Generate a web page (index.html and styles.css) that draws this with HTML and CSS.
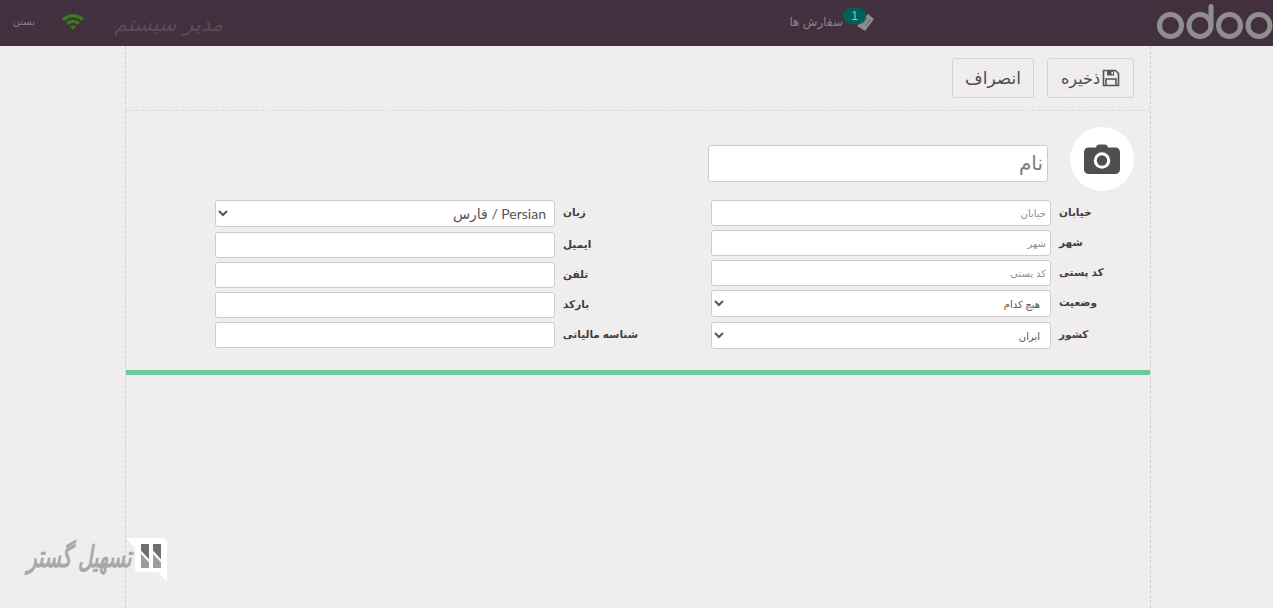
FILE: index.html
```html
<!DOCTYPE html>
<html lang="fa" dir="rtl">
<head>
<meta charset="utf-8">
<title>مشتری</title>
<link rel="stylesheet" href="styles.css">
</head>
<body>
<header class="topbar">
  <svg class="brand" viewBox="0 0 116 38" aria-label="odoo">
    <g fill="none" stroke="#8f8f8f" stroke-width="5">
      <circle cx="13.500" cy="24.500" r="11"/>
      <circle cx="43" cy="24.500" r="11"/>
      <circle cx="72.500" cy="24.500" r="11"/>
      <circle cx="102" cy="24.500" r="11"/>
      <path d="M54 24V5.500" stroke-linecap="round"/>
    </g>
  </svg>
  <div class="orders">
    <svg class="orders-icon" viewBox="0 0 20 20"><path d="M13 2l6 5-9 12-8-5 2-2z" fill="#8d8d8d"/><path d="M7 12l5-6M10 14l5-6" stroke="#5e5e5e" stroke-width="1"/></svg>
    <span class="orders-badge">1</span>
    <span class="orders-label">سفارش ها</span>
  </div>
  <div class="session">
    <span class="system-name">مدیر سیستم</span>
    <svg class="wifi" viewBox="0 0 24 18"><path d="M1 6.500C7.500 .5 16.500 .5 23 6.500l-2.300 2.500C15.500 4.300 8.500 4.300 3.300 9z M5 10.500c4-3.700 10-3.700 14 0l-2.300 2.400c-2.800-2.500-6.600-2.500-9.400 0z M9 14.500c1.800-1.500 4.200-1.500 6 0l-3 3.200z" fill="#3c7a1e"/></svg>
    <span class="close-link">بستن</span>
  </div>
</header>

<main class="sheet">
  <div class="toolbar">
    <button class="btn" type="button">
      <svg class="btn-icon" viewBox="0 0 18 18"><path d="M1.500 1.500h12l3 3v12h-15z" fill="none" stroke="#555" stroke-width="1.600"/><path d="M5 2h7v4.500H5z" fill="#555"/><path d="M4 16v-6h10v6" fill="none" stroke="#555" stroke-width="1.600"/><path d="M9.500 2.800h1.500v2.500H9.500z" fill="#efedee"/></svg>
      ذخیره
    </button>
    <button class="btn btn-cancel" type="button">انصراف</button>
  </div>

  <form class="form">
    <div class="identity">
      <div class="avatar">
        <svg viewBox="0 0 36 30"><path d="M12 3.500C12.500 1.500 13.500 .5 15.500 .5h5c2 0 3 1 3.500 3h7.500c2.500 0 4.500 2 4.500 4.500v17.500c0 2.500-2 4.500-4.500 4.500h-26C2 30 0 28 0 25.500V8c0-2.500 2-4.500 4.500-4.500z" fill="#4f4f4f"/><circle cx="18" cy="16.500" r="8.200" fill="#fff"/><circle cx="18" cy="16.500" r="5.200" fill="#4f4f4f"/></svg>
      </div>
      <input class="name-input" type="text" placeholder="نام">
    </div>

    <div class="columns">
      <div class="field-grid">
        <label>خیابان</label><input type="text" placeholder="خیابان">
        <label>شهر</label><input type="text" placeholder="شهر">
        <label>کد پستی</label><input type="text" placeholder="کد پستی">
        <label>وضعیت</label><select class="select-minor"><option>هیچ کدام</option></select>
        <label>کشور</label><select class="select-minor"><option>ایران</option></select>
      </div>
      <div class="field-grid">
        <label>زبان</label><select><option>Persian / فارس</option></select>
        <label>ایمیل</label><input type="text">
        <label>تلفن</label><input type="text">
        <label>بارکد</label><input type="text">
        <label>شناسه مالیاتی</label><input type="text">
      </div>
    </div>
  </form>
  <div class="accent"></div>
</main>

<div class="watermark">
  <svg class="watermark-mark" viewBox="0 0 43 44"><path d="M1 0h37c2 0 4 2 4 4v40l-9-10H13c-2 0-3-1-3-3V10z" fill="#fff"/><path d="M16 6h8v24h-8zM28 6h8v24h-8z" fill="#6f6f6f"/><path d="M16 15l8 9v6h-8zM28 15l8 9v6h-8z" fill="#9c9c9c"/><path d="M15 13l10 11M27 13l10 11" stroke="#fff" stroke-width="2"/></svg>
  <span class="watermark-text">تسهیل گستر</span>
</div>
</body>
</html>
```
FILE: styles.css
```css
* { box-sizing: border-box; }
html, body { margin: 0; height: 100%; }
body {
  background: #efedee;
  font-family: "Liberation Sans", "DejaVu Sans", sans-serif;
  color: #4c4c4c;
  overflow: hidden;
}
.topbar {
  height: 46px;
  background: #43303f;
  display: flex;
  align-items: flex-start;
}
.brand { width: 116px; height: 38px; margin-top: 1px; flex: none; }
.orders {
  position: relative;
  display: flex;
  align-items: center;
  margin-right: 282px;
  margin-top: 10px;
  height: 24px;
}
.orders-icon { width: 20px; height: 20px; }
.orders-badge {
  position: absolute;
  right: 9px;
  top: -2px;
  width: 23px;
  height: 16px;
  border-radius: 8px;
  background: #00615a;
  color: #a9bdb9;
  font-size: 12px;
  line-height: 16px;
  text-align: center;
}
.orders-label { margin-right: 12px; font-size: 12px; color: #8d828b; }
.session {
  margin-right: auto;
  display: flex;
  align-items: center;
  padding-left: 15px;
  height: 42px;
}
.system-name {
  font-size: 21px;
  font-style: italic;
  color: #5b4b58;
  width: 110px;
  margin-left: 28px;
  margin-top: 5px;
  white-space: nowrap;
}
.wifi { width: 24px; height: 18px; margin-left: 26px; margin-top: -1px; }
.close-link { font-size: 10px; color: #857a8c; width: 20px; white-space: nowrap; }

.sheet {
  margin-right: 122px;
  width: 1026px;
  height: 562px;
  border-left: 1px dashed #cfcfcf;
  border-right: 1px dashed #cfcfcf;
}
.toolbar {
  height: 65px;
  padding: 12px 16px 0 0;
  display: flex;
  gap: 13px;
  border-bottom: 1px dashed #d8d8d8;
}
.btn {
  height: 40px;
  width: 87px;
  display: flex;
  align-items: center;
  justify-content: center;
  gap: 2px;
  background: #efedee;
  border: 1px solid #d3d3d3;
  border-radius: 3px;
  font: 16px "Liberation Sans", "DejaVu Sans", sans-serif;
  color: #4c4c4c;
  padding: 0;
}
.btn-cancel { width: 82px; font-size: 17px; }
.btn-icon { width: 18px; height: 18px; flex: none; }
.form { padding: 16px 16px 0 0; }
.identity { display: flex; align-items: flex-start; gap: 22px; }
.avatar {
  width: 64px;
  height: 64px;
  border-radius: 50%;
  background: #fff;
  display: flex;
  align-items: center;
  justify-content: center;
}
.avatar svg { width: 36px; height: 30px; }
input, select {
  background: #fff;
  border: 1px solid #ccc;
  border-radius: 3px;
  width: 340px;
  height: 26px;
  padding: 0 4px;
  font: 10px "Liberation Sans", "DejaVu Sans", sans-serif;
  color: #555;
  outline: none;
}
input::placeholder { color: #8f8f8f; opacity: 1; }
select { height: 27px; margin-bottom: 1px; font: 14px Lato, "DejaVu Sans", sans-serif; padding: 0 4px; }
.select-minor { font-size: 10px; padding: 0 6px; }
.name-input {
  height: 37px;
  margin-top: 18px;
  font-size: 20px;
  padding: 0 4px;
}
.name-input::placeholder { color: #7d7d7d; }
.columns {
  display: flex;
  align-items: flex-start;
  gap: 73px;
  margin-top: 9px;
}
.field-grid {
  display: grid;
  grid-template-columns: 83px 340px;
  row-gap: 4px;
  align-items: start;
}
.field-grid label {
  height: 26px;
  font-size: 10.5px;
  font-weight: bold;
  color: #3f3f3f;
  padding-left: 8px;
  text-align: left;
  line-height: 24px;
  white-space: nowrap;
}
.accent {
  height: 5px;
  background: #6ec89b;
  margin-top: 20px;
}
.watermark {
  position: absolute;
  left: 24px;
  top: 538px;
  width: 144px;
  height: 46px;
}
.watermark-text {
  position: absolute;
  left: 0;
  top: 6px;
  width: 108px;
  font-size: 20px;
  font-style: italic;
  font-weight: bold;
  color: #a8a8a8;
  white-space: nowrap;
  transform: scaleY(1.5);
}
.watermark-mark {
  position: absolute;
  left: 101px;
  top: 0;
  width: 43px;
  height: 44px;
}
```
